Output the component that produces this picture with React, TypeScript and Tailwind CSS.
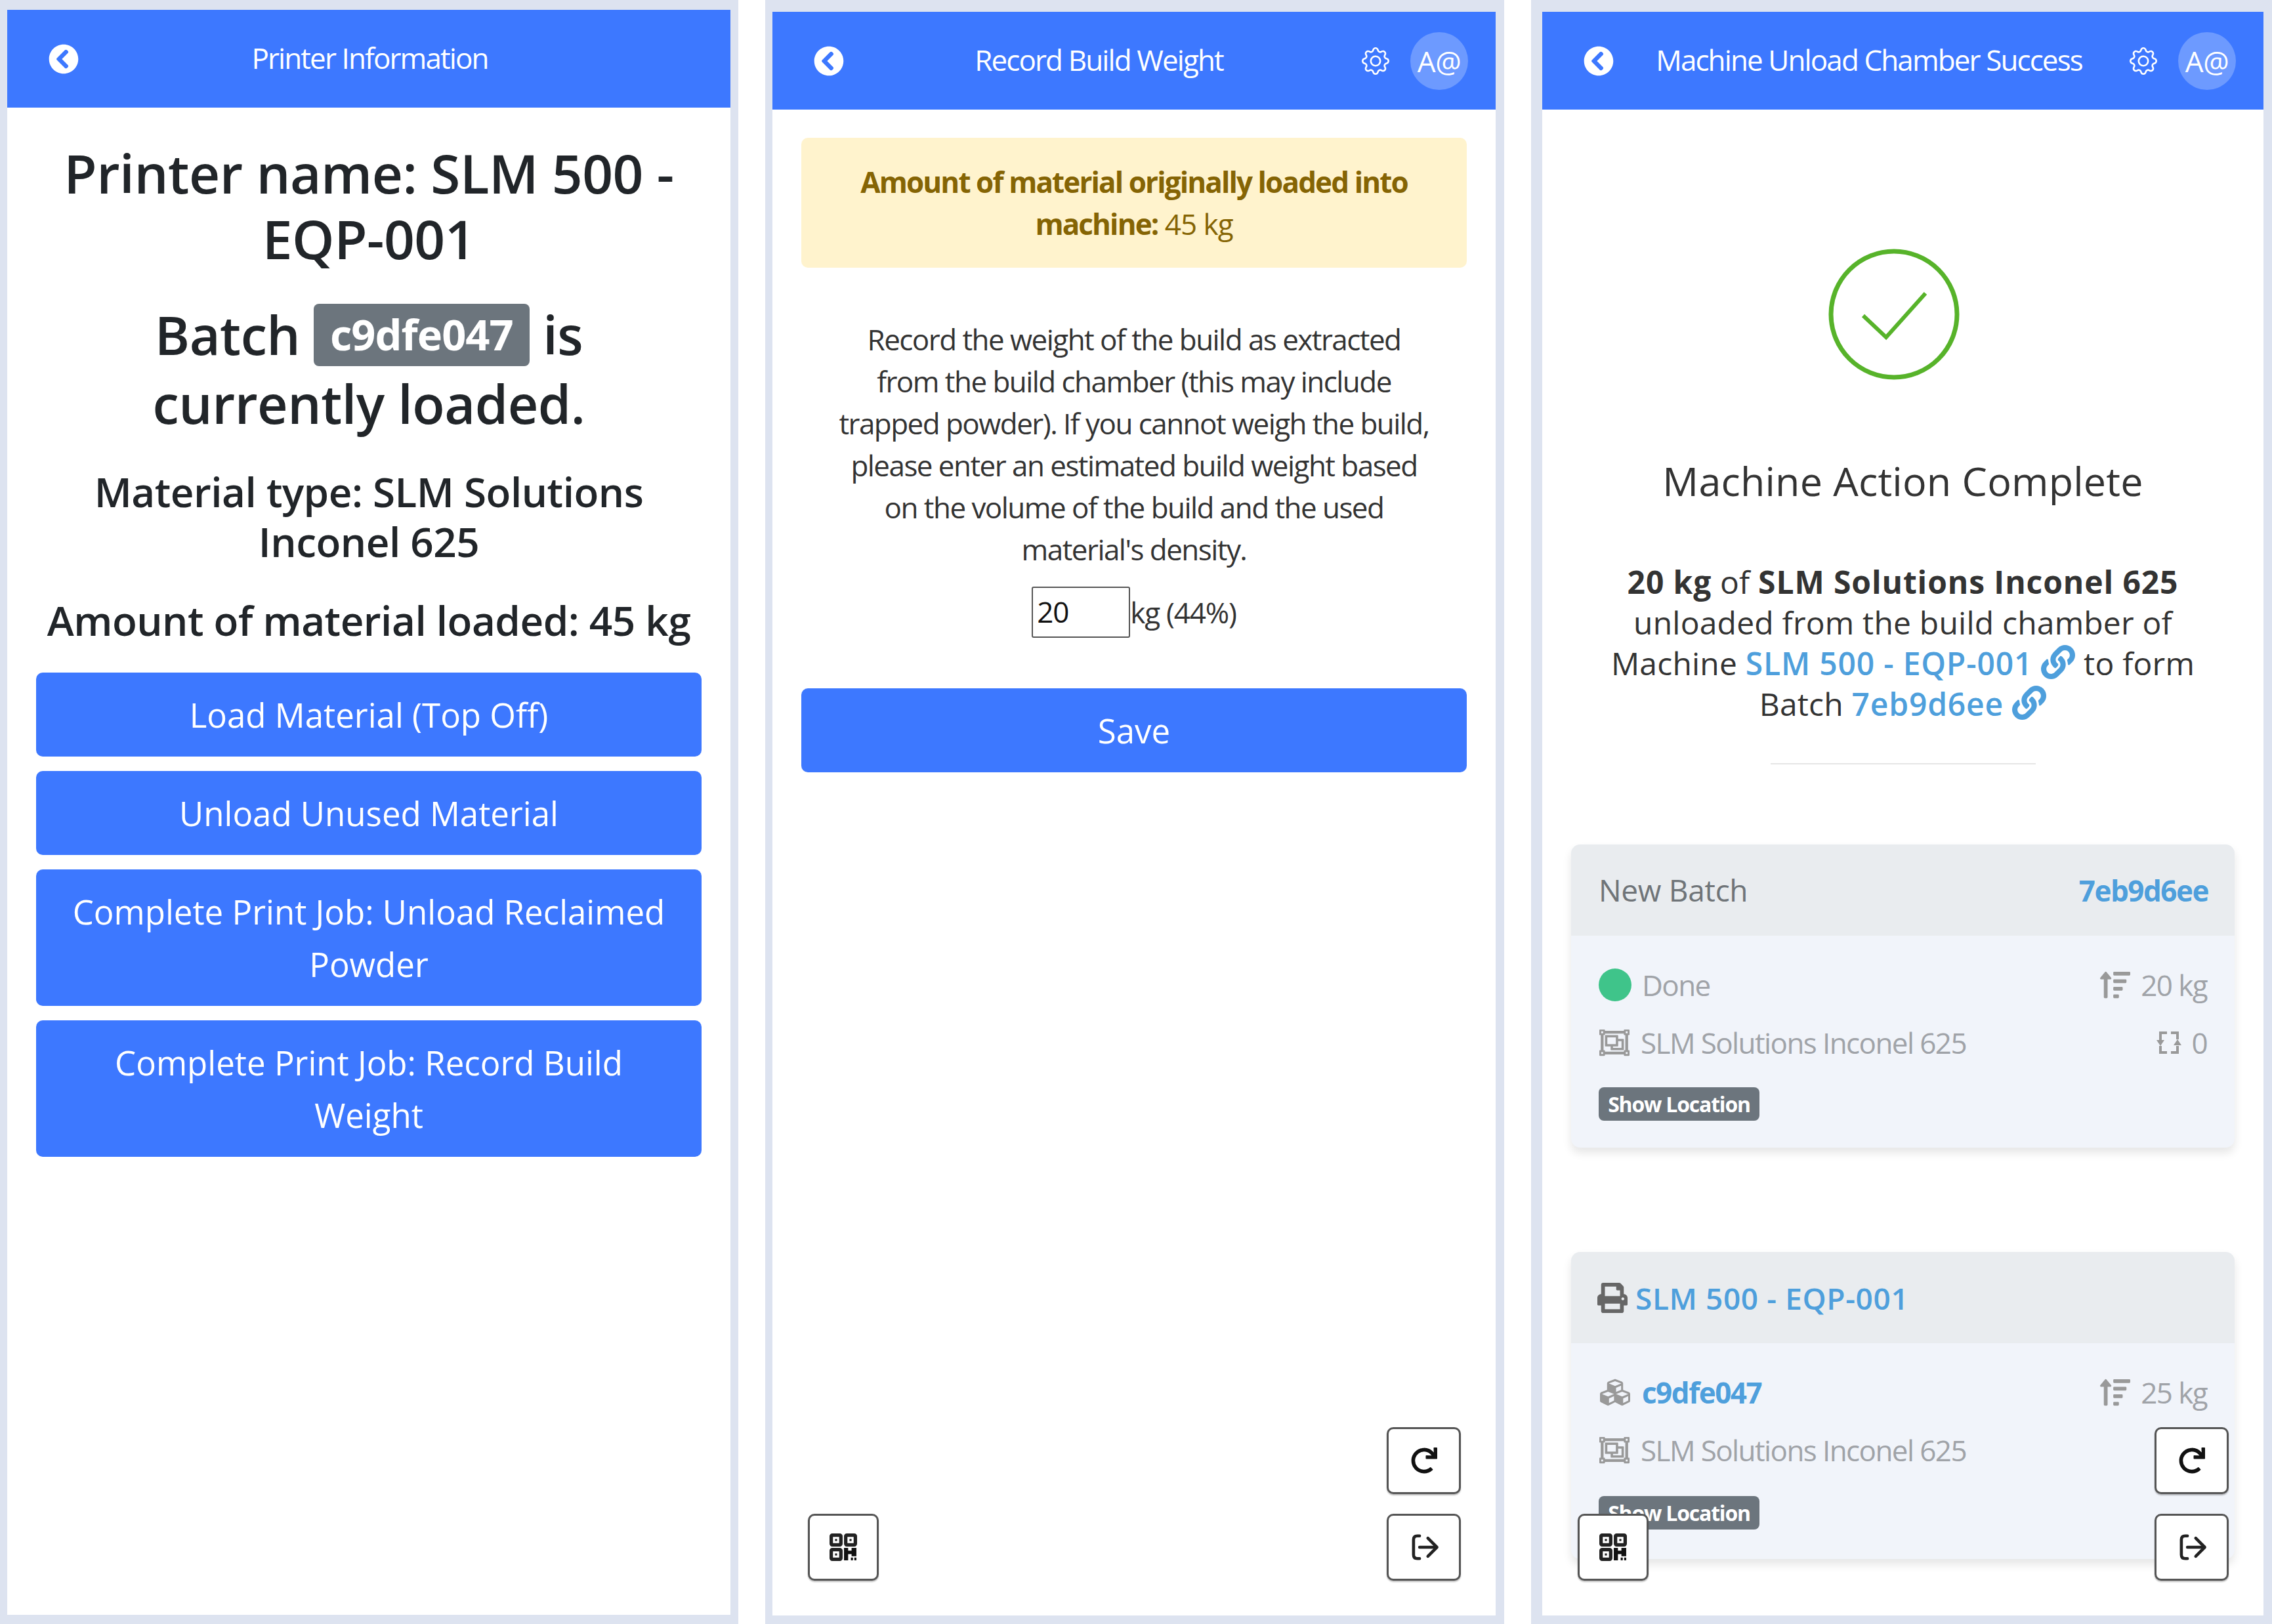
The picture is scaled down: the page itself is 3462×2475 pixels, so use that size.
import type { ReactNode } from 'react';
import { FaChevronCircleLeft, FaRedo, FaCubes, FaPrint, FaLink, FaRegObjectGroup, FaSortAmountUp } from 'react-icons/fa';
import { BsGear } from 'react-icons/bs';

const btn = 'w-full rounded-[10px] bg-[#3d78ff] text-white text-[51px] leading-[80px] text-center py-[24px]';

function Header({ title, user = true, left = '' }: { title: string; user?: boolean; left?: string }) {
  return (
    <div className="h-[149px] shrink-0 bg-[#3d78ff] text-white flex items-center pl-[63px] pr-[42px]">
      <FaChevronCircleLeft className="w-[46px] h-[46px] shrink-0" />
      <div className={`flex-1 text-center text-[44px] tracking-[-1.9px] whitespace-nowrap pb-[4px] ${left}`}>{title}</div>
      {user && (
        <div className="flex items-center gap-[32px]">
          <BsGear className="w-[42px] h-[42px]" />
          <div className="w-[88px] h-[88px] rounded-full bg-[#6d9aff] flex items-center justify-center text-[44px] tracking-[-0.5px]">A@</div>
        </div>
      )}
    </div>
  );
}

function QrIcon() {
  return (
    <svg viewBox="0 0 40 40" className="w-[42px] h-[42px]">
      <g fill="none" stroke="#222" strokeWidth="5">
        <rect x="2.5" y="2.5" width="14" height="14" rx="1.5" />
        <rect x="23.5" y="2.5" width="14" height="14" rx="1.5" />
        <rect x="2.5" y="23.5" width="14" height="14" rx="1.5" />
      </g>
      <rect x="8" y="8" width="3" height="3" fill="#222" />
      <rect x="29" y="8" width="3" height="3" fill="#222" />
      <rect x="8" y="29" width="3" height="3" fill="#222" />
      <path d="M21 21h6v4h5v-4h7v12h-7v-3h-5v9h-6z" fill="#111" />
      <rect x="31" y="35" width="3" height="4" fill="#111" />
      <rect x="36" y="35" width="3" height="4" fill="#111" />
    </svg>
  );
}

function LogoutIcon() {
  return (
    <svg viewBox="0 0 40 40" className="w-[46px] h-[46px]" fill="none" stroke="#222" strokeWidth="4" strokeLinecap="round" strokeLinejoin="round">
      <path d="M14 5h-3q-5 0-5 5v20q0 5 5 5h3" />
      <path d="M14 20h22" />
      <path d="M25 8l12 12-12 12" />
    </svg>
  );
}

function FloatBtn({ className, children }: { className: string; children: ReactNode }) {
  return (
    <div className={`absolute h-[102px] rounded-[10px] border-[3px] border-[#555] bg-white flex items-center justify-center shadow-[0_2px_2px_rgba(0,0,0,0.25)] ${className}`}>
      {children}
    </div>
  );
}

function FloatButtons() {
  return (
    <>
      <FloatBtn className="right-[53px] bottom-[185px] w-[113px]">
        <FaRedo className="w-[40px] h-[40px] text-[#111]" />
      </FloatBtn>
      <FloatBtn className="right-[53px] bottom-[53px] w-[113px]">
        <LogoutIcon />
      </FloatBtn>
      <FloatBtn className="left-[54px] bottom-[53px] w-[108px]">
        <QrIcon />
      </FloatBtn>
    </>
  );
}

function RecycleIcon() {
  return (
    <svg viewBox="0 0 40 40" className="w-[40px] h-[42px]" fill="none" stroke="#999" strokeWidth="4">
      <path d="M17 5H7v12M23 5h10v10M33 25v10H23M17 35H7V25" />
      <path d="M1 16h12l-6 9zM27 24h12l-6-9z" fill="#999" stroke="none" />
    </svg>
  );
}

function Row({ left, right }: { left: ReactNode; right?: ReactNode }) {
  return (
    <div className="flex items-center justify-between h-[88px] text-[44px] tracking-[-1.6px] text-[#a0a3a8]">
      <div className="flex items-center gap-[16px]">{left}</div>
      {right && <div className="flex items-center gap-[14px]">{right}</div>}
    </div>
  );
}

function Badge() {
  return (
    <div className="inline-block h-[51px] w-[245px] rounded-[8px] bg-[#6c757d] text-white text-[32px] leading-[51px] font-bold text-center tracking-[-1.2px] whitespace-nowrap">
      Show Location
    </div>
  );
}

const weight = (kg: string) => (
  <>
    <FaSortAmountUp className="w-[50px] h-[46px] text-[#999]" />
    <span>{kg}</span>
  </>
);

const material = (
  <>
    <FaRegObjectGroup className="w-[48px] h-[46px] text-[#999]" />
    <span>SLM Solutions Inconel 625</span>
  </>
);

export default function App() {
  return (
    <div className="w-[3462px] h-[2475px] overflow-hidden bg-white font-['Open_Sans',sans-serif] text-[#212529] flex gap-[41px]">
      {/* printer info */}
      <div className="w-[1125px] bg-[#dde3f0] pl-[11px] pr-[12px] pt-[15px] pb-[14px] flex">
        <div className="relative flex-1 bg-white flex flex-col">
          <Header title="Printer Information" user={false} left="pr-[64px]" />
          <div className="px-[44px] pt-[49px] text-center">
            <h1 className="text-[82px] leading-[100px] tracking-[-0.5px] font-semibold whitespace-nowrap">Printer name: SLM 500 -<br />EQP-001</h1>
            <h2 className="mt-[44px] text-[81px] leading-[105px] tracking-[-0.5px] font-semibold whitespace-nowrap">
              Batch{' '}
              <span className="inline-block -my-[20px] align-[7px] h-[95px] leading-[92px] px-[25px] rounded-[8px] bg-[#6c757d] text-white text-[65px] font-bold tracking-[-1px]">c9dfe047</span>{' '}
              is<br />currently loaded.
            </h2>
            <h3 className="mt-[44px] text-[62px] leading-[76px] font-semibold tracking-[-0.5px] whitespace-nowrap">Material type: SLM Solutions<br />Inconel 625</h3>
            <h3 className="mt-[44px] text-[62px] leading-[76px] font-semibold tracking-[-0.5px] whitespace-nowrap">Amount of material loaded: 45 kg</h3>
            <div className="mt-[42px] flex flex-col gap-[22px]">
              <div className={btn}>Load Material (Top Off)</div>
              <div className={btn}>Unload Unused Material</div>
              <div className={btn}>Complete Print Job: Unload Reclaimed<br />Powder</div>
              <div className={btn}>Complete Print Job: Record Build<br />Weight</div>
            </div>
          </div>
        </div>
      </div>

      {/* record weight */}
      <div className="w-[1126px] bg-[#dde3f0] pl-[11px] pr-[13px] pt-[18px] pb-[13px] flex">
        <div className="relative flex-1 bg-white flex flex-col">
          <Header title="Record Build Weight" left="pr-[12px]" />
          <div className="px-[44px] pt-[43px] text-center">
            <div className="h-[198px] rounded-[10px] bg-[#fff3cd] text-[#856404] text-[44px] leading-[64px] pt-[35px] tracking-[-1px]">
              <b className="font-bold tracking-[-1.9px]">Amount of material originally loaded into<br />machine:</b> 45 kg
            </div>
            <p className="mt-[77px] text-[44px] leading-[64px] tracking-[-1.55px] text-[#333] whitespace-nowrap">
              Record the weight of the build as extracted<br />
              from the build chamber (this may include<br />
              trapped powder). If you cannot weigh the build,<br />
              please enter an estimated build weight based<br />
              on the volume of the build and the used<br />
              material's density.
            </p>
            <div className="mt-[25px] h-[78px] flex justify-center items-center text-[44px] tracking-[-1.2px] text-[#333]">
              <div className="w-[150px] h-[78px] border-[2px] border-[#555] rounded-[3px] text-left pl-[6px] leading-[72px] text-[#111]">20</div>
              <span>kg (44%)</span>
            </div>
            <div className={`${btn} mt-[77px]`}>Save</div>
          </div>
          <FloatButtons />
        </div>
      </div>

      {/* success */}
      <div className="flex-1 bg-[#dde3f0] pl-[17px] pr-[13px] pt-[18px] pb-[13px] flex">
        <div className="relative flex-1 bg-white flex flex-col overflow-hidden">
          <Header title="Machine Unload Chamber Success" left="pr-[8px]" />
          <div className="px-[44px] pt-[212px]">
            <svg viewBox="0 0 200 200" className="w-[200px] h-[200px] mx-auto -translate-x-[14px]" fill="none" stroke="#57b32a">
              <circle cx="100" cy="100" r="96" strokeWidth="7" />
              <path d="M53 102l35 33 60-67" strokeWidth="6" />
            </svg>
            <div className="mt-[114px] text-center text-[61px] leading-[80px] text-[#333] tracking-[0.2px] whitespace-nowrap">Machine Action Complete</div>
            <div className="mt-[83px] text-center text-[48px] leading-[62px] text-[#333] tracking-[0.2px] whitespace-nowrap">
              <b className="tracking-[0.9px]">20 kg</b> of <b className="tracking-[0.9px]">SLM Solutions Inconel 625</b><br />
              unloaded from the build chamber of<br />
              Machine <span className="text-[#4e9fdc] font-semibold tracking-[0.8px]">SLM 500 - EQP-001 <FaLink className="inline w-[52px] h-[52px] align-[-6px]" /></span> to form<br />
              Batch <span className="text-[#4e9fdc] font-semibold tracking-[0.8px]">7eb9d6ee <FaLink className="inline w-[52px] h-[52px] align-[-6px]" /></span>
            </div>
            <hr className="mt-[59px] mx-auto w-[404px] border-[#e5e5e5] border-t-[2px]" />

            <div className="mt-[122px] rounded-[14px] overflow-hidden bg-[#f1f4fa] shadow-[0_8px_14px_rgba(0,0,0,0.1)]">
              <div className="h-[139px] bg-[#e9ecef] flex items-center justify-between px-[42px] pr-[40px]">
                <span className="text-[46px] text-[#6f7478] tracking-[-0.3px]">New Batch</span>
                <span className="text-[44px] font-bold text-[#4e9fdc] tracking-[-1.5px]">7eb9d6ee</span>
              </div>
              <div className="px-[42px] pt-[31px] h-[323px]">
                <Row left={<><div className="w-[50px] h-[50px] rounded-full bg-[#3fc48a]" /><span>Done</span></>} right={weight('20 kg')} />
                <Row left={material} right={<><RecycleIcon /><span>0</span></>} />
                <div className="mt-[24px]"><Badge /></div>
              </div>
            </div>

            <div className="mt-[159px] rounded-[14px] overflow-hidden bg-[#f1f4fa] shadow-[0_8px_14px_rgba(0,0,0,0.1)]">
              <div className="h-[139px] bg-[#e9ecef] flex items-center gap-[12px] px-[40px]">
                <FaPrint className="w-[46px] h-[46px] text-[#666]" />
                <span className="text-[46px] font-semibold text-[#4e9fdc] tracking-[0.6px] pt-[2px]">SLM 500 - EQP-001</span>
              </div>
              <div className="px-[42px] pt-[31px] h-[329px]">
                <Row left={<><FaCubes className="w-[50px] h-[46px] text-[#999]" /><span className="font-bold text-[#4e9fdc] tracking-[-1.5px]">c9dfe047</span></>} right={weight('25 kg')} />
                <Row left={material} />
                <div className="mt-[26px]"><Badge /></div>
              </div>
            </div>
          </div>
          <FloatButtons />
        </div>
      </div>
    </div>
  );
}
